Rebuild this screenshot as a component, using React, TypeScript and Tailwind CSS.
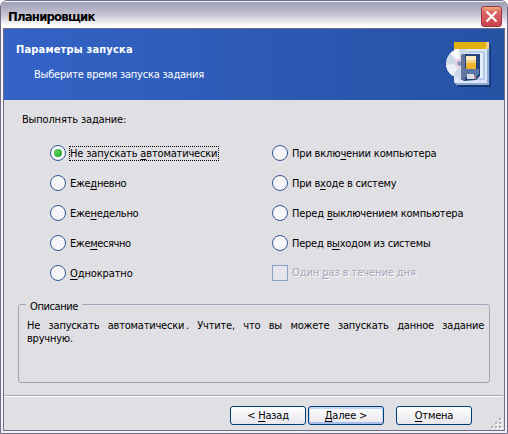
import type { ReactNode } from 'react';

type Item = { pre: string; key: string; post: string; spacing: string };

const LEFT: Item[] = [
  { pre: 'Не запускать ', key: 'а', post: 'втоматически', spacing: 'tracking-[-0.17px]' },
  { pre: 'Еже', key: 'д', post: 'невно', spacing: 'tracking-[-0.3px]' },
  { pre: 'Еже', key: 'н', post: 'едельно', spacing: 'tracking-[-0.28px]' },
  { pre: 'Еже', key: 'м', post: 'есячно', spacing: 'tracking-[-0.38px]' },
  { pre: '', key: 'О', post: 'днократно', spacing: 'tracking-[-0.12px]' },
];

const RIGHT: Item[] = [
  { pre: 'При вклю', key: 'ч', post: 'ении компьютера', spacing: 'tracking-[-0.17px]' },
  { pre: 'При в', key: 'х', post: 'оде в систему', spacing: 'tracking-[-0.22px]' },
  { pre: 'Перед ', key: 'в', post: 'ыключением компьютера', spacing: 'tracking-[-0.17px]' },
  { pre: 'Перед в', key: 'ы', post: 'ходом из системы', spacing: 'tracking-[-0.24px]' },
];

/** Text with one underlined access key. */
function Hotkey({ pre, letter, post }: { pre: string; letter: string; post: string }) {
  return (
    <>
      {pre}
      <span className="underline decoration-1 underline-offset-2">{letter}</span>
      {post}
    </>
  );
}

function Radio({ item, checked }: { item: Item; checked?: boolean }) {
  return (
    <div className="flex h-[30px] items-center">
      <span className="flex size-4 shrink-0 items-center justify-center rounded-full border border-[#2f5796] bg-[#f6f6f8]">
        {checked && <span className="size-2 rounded-full bg-[radial-gradient(circle_at_35%_35%,#5fd05f,#22a122)]" />}
      </span>
      <span className={`ml-[3px] h-[15px] border border-dotted pr-px leading-[13px] ${checked ? 'border-black' : 'border-transparent'} ${item.spacing}`}>
        <Hotkey pre={item.pre} letter={item.key} post={item.post} />
      </span>
    </div>
  );
}

function Button({ children, primary, className }: { children: ReactNode; primary?: boolean; className?: string }) {
  return (
    <button
      type="button"
      className={`h-[19px] w-[76px] rounded-[3px] border border-[#003c74] bg-linear-to-b from-white to-[#e6e6ec] leading-[17px] tracking-[-0.2px] ${primary ? 'shadow-[inset_0_1px_0_1px_#c6d7f6,inset_0_-1px_0_1px_#a9c0ee]' : ''} ${className ?? ''}`}
    >
      {children}
    </button>
  );
}

/** Calendar page with a disc and a floppy in front of it. */
function TaskIcon() {
  return (
    <svg width="46" height="48" viewBox="0 0 46 48">
      <path d="M12 45h32V5h1v42H12z" fill="#14386f" />
      <path d="M8 2h35v43H11l-3-3z" fill="#dce8fa" />
      <path d="M41 9h2v36H11l-2-2h32z" fill="#8fabd4" />
      <path d="M8 2h35v7H8z" fill="#e2b010" />
      <path d="M40 2h3v7h-3z" fill="#f5cf86" />
      <path d="M14 11h25v29H14z" fill="#b3caea" />
      <path d="M16 13h21v25H16z" fill="#e4edfa" />
      <circle cx="14.5" cy="23.500" r="14.500" fill="#cfd8e6" />
      <path d="M14.500 23.500L4 13.500A14.500 14.500 0 0 1 13 9z" fill="#f8fafc" />
      <path d="M14.500 23.500L0 25a14.500 14.500 0 0 0 7 11z" fill="#eef1f7" />
      <circle cx="13.500" cy="23.500" r="5" fill="#eecfe5" />
      <circle cx="13.500" cy="23.500" r="2.200" fill="#7b94bf" />
      <path d="M15 15l3-1h16v22l-4 4-12 1-3-2z" fill="#23437b" />
      <path d="M15 15l4-1v26l-4-1z" fill="#65779c" />
      <path d="M19 29h14v5l-3 3H19z" fill="#5877a4" />
      <path d="M20 16h10v13H20z" fill="#efb52c" />
      <path d="M20 16h10v4H20z" fill="#fbe9c4" />
      <path d="M20 20h10v3H20z" fill="#f6d384" />
      <path d="M21 34h7v5h-7z" fill="#dcdde3" />
      <path d="M28 36h2v3h-2z" fill="#c98a94" />
    </svg>
  );
}

const GRIP = [[8, 0], [4, 4], [8, 4], [0, 8], [4, 8], [8, 8]];

function SizeGrip() {
  return (
    <svg className="mr-px mb-px ml-auto self-end" width="11" height="11" viewBox="0 0 11 11" shapeRendering="crispEdges">
      {GRIP.map(([x, y]) => (
        <g key={`${x}-${y}`}>
          <rect x={x + 1} y={y + 1} width="2" height="2" fill="#fff" />
          <rect x={x} y={y} width="2" height="2" fill="#b3acb2" />
        </g>
      ))}
    </svg>
  );
}

export default function App() {
  return (
    <div className="flex h-[434px] w-[508px] flex-col overflow-hidden rounded-t-[7px] border border-[#6e6c86] bg-[#f3f3f7] font-['DejaVu_Sans_Condensed','DejaVu_Sans',sans-serif] text-[11px] whitespace-nowrap text-black">
      <div className="flex h-[27px] shrink-0 items-start justify-between border-t border-[#f4f4f8] bg-linear-to-b from-[#a5a5ba] from-10% via-[#c6c6d4] via-50% to-white to-90% pt-[4px] pr-[5px] pl-[7px]">
        <span className="mt-[3px] text-[13px] leading-[16px] font-bold tracking-[-0.8px]">Планировщик</span>
        <span className="flex size-[21px] items-center justify-center rounded-[3px] border border-[#9c3446] bg-linear-to-b from-[#f0b07c] via-[#dc6a66] via-25% to-[#c9404c]">
          <svg width="13" height="13" viewBox="0 0 13 13" stroke="#fff" strokeWidth="2.2">
            <path d="M1.500 1.500l10 10M11.500 1.500l-10 10" />
          </svg>
        </span>
      </div>

      <div className="mx-[2px] mb-[2px] flex flex-1 flex-col border border-[#6e6c86] bg-[#e0dfe4]">
        <header className="flex h-[71px] shrink-0 justify-between bg-linear-to-r from-[#3363c6] to-[#2652a4] pt-[11px] pr-[12px] pl-[12px] text-white">
          <div>
            <h1 className="mt-[3px] leading-[14px] font-bold tracking-[0.18px]">Параметры запуска</h1>
            <p className="mt-[11px] ml-[18px] leading-[14px] tracking-[-0.22px]">Выберите время запуска задания</p>
          </div>
          <TaskIcon />
        </header>

        <main className="flex flex-1 flex-col">
          <p className="mt-[13px] ml-[18px] leading-[14px] tracking-[-0.17px]">Выполнять задание:</p>
          <div className="mt-[11px] flex pl-[46px]">
            <div className="w-[222px]">
              {LEFT.map((item, i) => <Radio key={i} item={item} checked={i === 0} />)}
            </div>
            <div>
              {RIGHT.map((item, i) => <Radio key={i} item={item} />)}
              <div className="flex h-[30px] items-center text-[#a5a3b8]">
                <span className="size-4 border border-[#8c9fc8] bg-[#e6e6ea]" />
                <span className="mt-px ml-[4px] tracking-[-0.08px] [text-shadow:1px_1px_0_#fff]">
                  <Hotkey pre="Один " letter="р" post="аз в течение дня" />
                </span>
              </div>
            </div>
          </div>
          <fieldset className="mt-[6px] ml-[14px] h-[89px] w-[472px] rounded-[3px] border border-[#a5a3b8] pl-[7px]">
            <legend className="px-[4px] pt-[6px] leading-[14px] tracking-[-0.4px]">Описание</legend>
            <div className="mt-[5px] ml-px w-[457px] leading-[13px] tracking-[-0.22px]">
              <p className="whitespace-normal [text-align-last:justify]">
                {'Не запускать автоматически\u2009. Учтите, что вы можете запускать данное задание'}
              </p>
              <p>вручную.</p>
            </div>
          </fieldset>
        </main>

        <footer className="mx-px flex h-[35px] shrink-0 border-t border-[#a5a3b8] pt-[10px] pl-[225px] shadow-[inset_0_1px_0_#fff]">
          <Button><Hotkey pre="< " letter="Н" post="азад" /></Button>
          <Button primary className="ml-[2px]"><Hotkey pre="" letter="Д" post="алее >" /></Button>
          <Button className="ml-[12px]"><Hotkey pre="" letter="О" post="тмена" /></Button>
          <SizeGrip />
        </footer>
      </div>
    </div>
  );
}
